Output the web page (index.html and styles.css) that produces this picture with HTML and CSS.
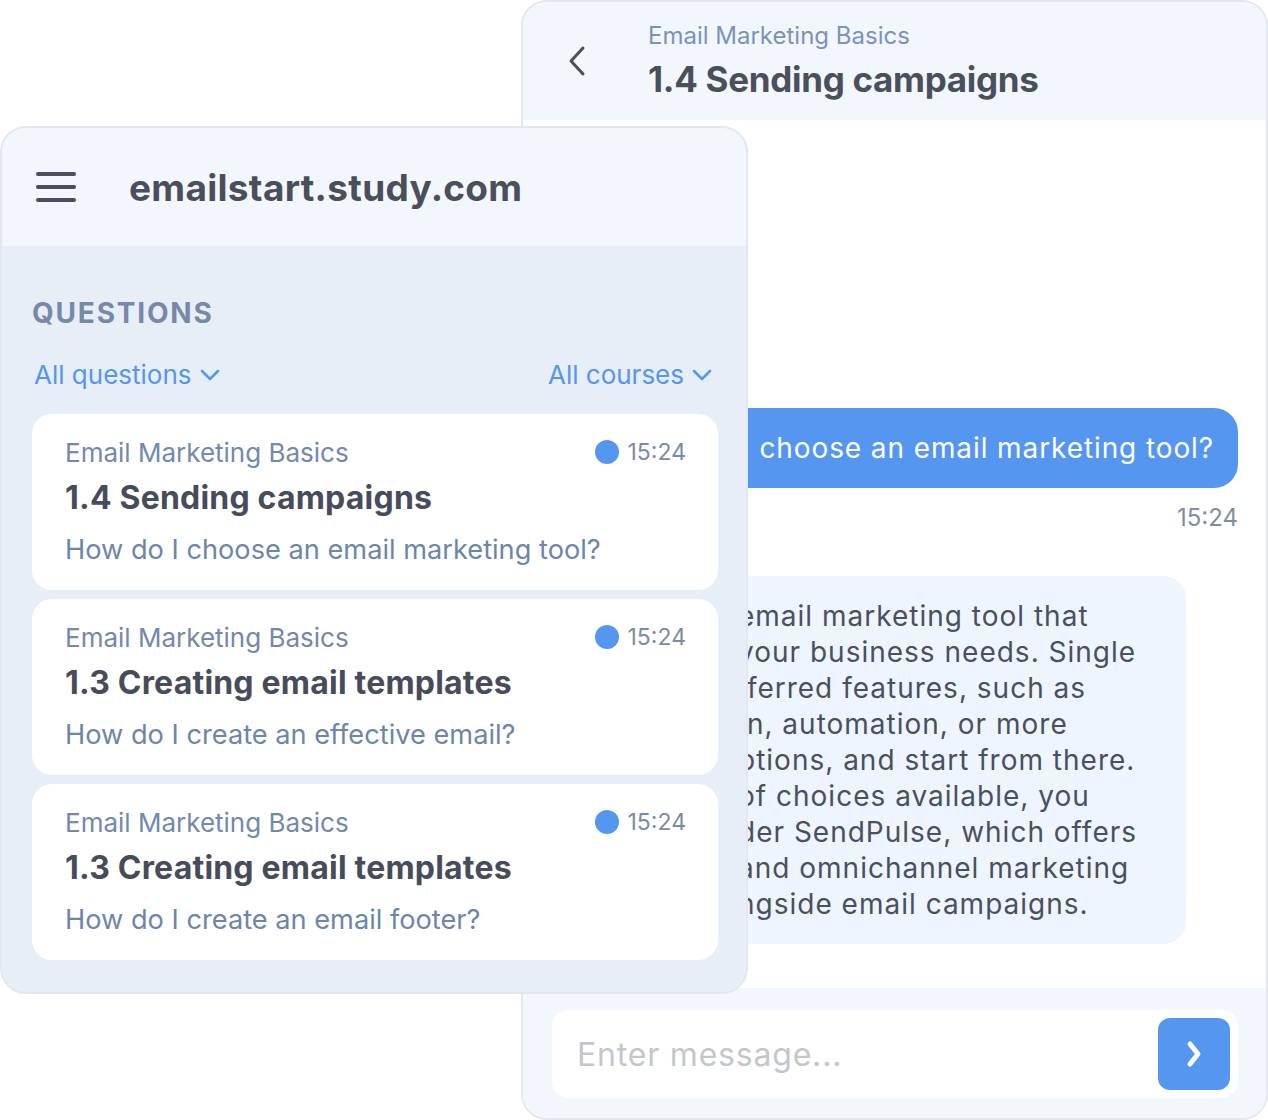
FILE: index.html
```html
<!DOCTYPE html>
<html lang="en">
<head>
    <meta charset="UTF-8">
    <meta name="viewport" content="width=device-width, initial-scale=1.0">
    <title>emailstart.study.com</title>
    <link rel="stylesheet" href="styles.css">
</head>
<body>
    <div class="stage">
        <!-- chat window, sits behind -->
        <section class="window chat">
            <header class="chat-head">
                <svg class="back" width="20" height="32" viewBox="0 0 20 32">
                    <path d="M16 3 L4 16 L16 29" fill="none" stroke="#4a4f5c" stroke-width="3" stroke-linecap="round" stroke-linejoin="round"/>
                </svg>
                <div class="chat-title">
                    <div class="course">Email Marketing Basics</div>
                    <div class="lesson">1.4 Sending campaigns</div>
                </div>
            </header>
            <div class="messages">
                <div class="bubble out">choose an email marketing tool?</div>
                <div class="time">15:24</div>
                <!-- left part of this bubble is covered by the questions window -->
                <div class="bubble in">
                    email marketing tool that<br>
                    your business needs. Single<br>
                    &nbsp;ferred features, such as<br>
                    &nbsp;n, automation, or more<br>
                    ptions, and start from there.<br>
                    of choices available, you<br>
                    der SendPulse, which offers<br>
                    and omnichannel marketing<br>
                    ngside email campaigns.
                </div>
            </div>
            <footer class="composer">
                <div class="input-box">
                    <input type="text" placeholder="Enter message...">
                    <button class="send">
                        <svg width="22" height="30" viewBox="0 0 22 30">
                            <path d="M7 5 L15 15 L7 25" fill="none" stroke="#fff" stroke-width="5" stroke-linecap="round" stroke-linejoin="round"/>
                        </svg>
                    </button>
                </div>
            </footer>
        </section>

        <!-- questions window, on top -->
        <section class="window questions">
            <header class="q-head">
                <div class="burger"><span></span><span></span><span></span></div>
                <div class="site">emailstart.study.com</div>
            </header>
            <div class="q-body">
                <h2 class="q-label">QUESTIONS</h2>
                <div class="filters">
                    <span class="filter">All questions
                        <svg width="20" height="12" viewBox="0 0 20 12"><path d="M2 2 L10 10 L18 2" fill="none" stroke="#5596f0" stroke-width="2.5" stroke-linecap="round" stroke-linejoin="round"/></svg>
                    </span>
                    <span class="filter">All courses
                        <svg width="20" height="12" viewBox="0 0 20 12"><path d="M2 2 L10 10 L18 2" fill="none" stroke="#5596f0" stroke-width="2.5" stroke-linecap="round" stroke-linejoin="round"/></svg>
                    </span>
                </div>
                <div class="cards">
                    <div class="card">
                        <div class="card-meta">
                            <span class="card-course">Email Marketing Basics</span>
                            <span class="card-time"><i class="dot"></i>15:24</span>
                        </div>
                        <div class="card-title">1.4 Sending campaigns</div>
                        <div class="card-question">How do I choose an email marketing tool?</div>
                    </div>
                    <div class="card">
                        <div class="card-meta">
                            <span class="card-course">Email Marketing Basics</span>
                            <span class="card-time"><i class="dot"></i>15:24</span>
                        </div>
                        <div class="card-title">1.3 Creating email templates</div>
                        <div class="card-question">How do I create an effective email?</div>
                    </div>
                    <div class="card">
                        <div class="card-meta">
                            <span class="card-course">Email Marketing Basics</span>
                            <span class="card-time"><i class="dot"></i>15:24</span>
                        </div>
                        <div class="card-title">1.3 Creating email templates</div>
                        <div class="card-question">How do I create an email footer?</div>
                    </div>
                </div>
            </div>
        </section>
    </div>
</body>
</html>
```

FILE: styles.css
```css
body {
    margin: 0;
    font-family: Inter, "Noto Sans", sans-serif;
    background-color: #fff;
}

.stage {
    position: relative;
    width: 1268px;
    height: 1120px;
    overflow: hidden;
}

.window {
    position: absolute;
    box-sizing: border-box;
    border: 2px solid #e3e8ef;
    border-radius: 26px;
    overflow: hidden;
    display: flex;
    flex-direction: column;
}

/* chat window */
.chat {
    left: 521px;
    top: 0;
    width: 747px;
    height: 1120px;
    background-color: #fff;
}

.chat-head {
    height: 118px;
    flex-shrink: 0;
    display: flex;
    align-items: center;
    padding-left: 44px;
    gap: 61px;
    background-color: #f2f7fe;
}

.course {
    font-size: 24px;
    line-height: 30px;
    color: #7b93b8;
}

.lesson {
    margin-top: 6px;
    font-size: 35px;
    line-height: 44px;
    font-weight: 700;
    color: #4a4f5c;
    letter-spacing: -0.3px;
}

.messages {
    flex: 1;
    display: flex;
    flex-direction: column;
    justify-content: flex-end;
    padding: 0 28px 44px 30px;
}

.bubble {
    font-size: 28px;
    line-height: 36px;
    letter-spacing: 1px;
    white-space: nowrap;
}

.bubble.out {
    align-self: flex-end;
    padding: 22px 24px 22px 60px;
    letter-spacing: 0.9px;
    background-color: #5596f0;
    color: #fff;
    border-radius: 24px;
}

.time {
    align-self: flex-end;
    margin-top: 15px;
    font-size: 24px;
    line-height: 30px;
    color: #7f8ea6;
}

.bubble.in {
    align-self: flex-start;
    box-sizing: border-box;
    margin-top: 43px;
    margin-left: 150px;
    width: 483px;
    padding: 22px 24px 22px 35px;
    background-color: #eef5fe;
    color: #4a505e;
    border-radius: 22px;
}

.composer {
    height: 130px;
    flex-shrink: 0;
    box-sizing: border-box;
    padding: 22px 28px 20px 29px;
    background-color: #f2f7fe;
}

.input-box {
    height: 88px;
    display: flex;
    align-items: center;
    padding: 0 8px 0 25px;
    background-color: #fff;
    border-radius: 16px;
}

.input-box input {
    flex: 1;
    border: none;
    outline: none;
    padding: 0;
    font-family: inherit;
    font-size: 32px;
    letter-spacing: 0.8px;
    color: #4a505e;
    background: transparent;
}

.input-box input::placeholder {
    color: #c3c7cd;
}

.send {
    width: 72px;
    height: 72px;
    border: none;
    border-radius: 12px;
    background-color: #5596f0;
    display: flex;
    align-items: center;
    justify-content: center;
    padding: 0;
}

/* questions window */
.questions {
    left: 0;
    top: 126px;
    width: 748px;
    height: 868px;
    background-color: #e8eef8;
}

.q-head {
    height: 118px;
    flex-shrink: 0;
    display: flex;
    align-items: center;
    padding-left: 34px;
    gap: 53px;
    background-color: #f2f7fe;
}

.burger {
    width: 40px;
    display: flex;
    flex-direction: column;
    gap: 9px;
}

.burger span {
    height: 4px;
    border-radius: 2px;
    background-color: #4b4f5c;
}

.site {
    font-size: 37px;
    font-weight: 700;
    color: #4b4f5c;
    letter-spacing: 0.3px;
}

.q-body {
    padding: 50px 28px 0 30px;
}

.q-label {
    margin: 0;
    font-size: 28px;
    line-height: 34px;
    font-weight: 700;
    letter-spacing: 1.8px;
    color: #7788a8;
}

.filters {
    margin-top: 28px;
    display: flex;
    justify-content: space-between;
    padding: 0 6px 0 2px;
}

.filter {
    display: flex;
    align-items: center;
    gap: 8px;
    font-size: 26px;
    line-height: 34px;
    color: #5596f0;
}

.cards {
    margin-top: 22px;
    display: flex;
    flex-direction: column;
    gap: 9px;
}

.card {
    height: 176px;
    box-sizing: border-box;
    padding: 21px 32px 0 33px;
    background-color: #fff;
    border-radius: 20px;
}

.card-meta {
    display: flex;
    justify-content: space-between;
    align-items: center;
    height: 34px;
}

.card-course {
    font-size: 26px;
    color: #7289ad;
}

.card-time {
    display: flex;
    align-items: center;
    gap: 9px;
    font-size: 23px;
    color: #7c8ba3;
}

.dot {
    width: 24px;
    height: 24px;
    border-radius: 50%;
    background-color: #5596f0;
}

.card-title {
    margin-top: 9px;
    font-size: 32px;
    line-height: 40px;
    font-weight: 700;
    color: #474c5a;
    letter-spacing: 0.2px;
}

.card-question {
    margin-top: 14px;
    font-size: 27.2px;
    line-height: 36px;
    color: #6b86aa;
}
```
